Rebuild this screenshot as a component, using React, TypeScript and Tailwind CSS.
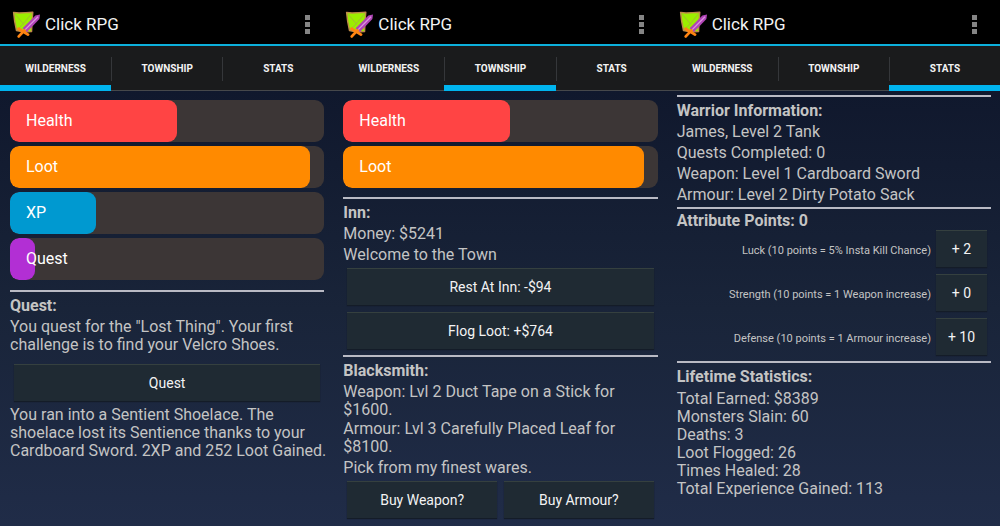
import React from 'react';

type TabName = 'Wilderness' | 'Township' | 'Stats';

const TABS: TabName[] = ['Wilderness', 'Township', 'Stats'];

const BARS = {
  health: { label: 'Health', percent: 53, color: 'bg-[#ff4444]' },
  loot: { label: 'Loot', percent: 95.5, color: 'bg-[#ff8a00]' },
  xp: { label: 'XP', percent: 27.5, color: 'bg-[#0099d0]' },
  quest: { label: 'Quest', percent: 8, color: 'bg-[#b22fd4]' },
};

const ATTRIBUTES = [
  { name: 'Luck', effect: '10 points = 5% Insta Kill Chance', points: 2 },
  { name: 'Strength', effect: '10 points = 1 Weapon increase', points: 0 },
  { name: 'Defense', effect: '10 points = 1 Armour increase', points: 10 },
];

const LIFETIME_STATS = [
  'Total Earned: $8389',
  'Monsters Slain: 60',
  'Deaths: 3',
  'Loot Flogged: 26',
  'Times Healed: 28',
  'Total Experience Gained: 113',
];

const Logo: React.FC = () => (
  <svg viewBox="0 0 28 28" className="h-7 w-7 shrink-0" aria-hidden="true">
    {/* shield */}
    <path d="M1.6 2.4 L7 3 L14 2.6 L20.8 2.2 L20 12 L19.6 21.5 L12 22 L4.5 20.5 L2.6 11 Z" fill="#9bee00" stroke="#c08a48" strokeWidth="1.4" strokeLinejoin="round" />
    <path d="M2.5 3.5 L12 14.5 M19.8 3.5 L11 14 L5 20" fill="none" stroke="#a3b23c" strokeWidth="0.8" />
    {/* sword */}
    <path d="M28 4.6 L27.4 9 L15 22 L10.6 18.2 L23.4 5.6 Z" fill="#b044b4" />
    <path d="M26 6.8 L13.2 19.6" stroke="#dd92e2" strokeWidth="1.3" />
    <path d="M6.6 18.8 L16 24.6 M12.4 20.4 L6.8 26.4" stroke="#ff8412" strokeWidth="2.8" strokeLinecap="round" />
  </svg>
);

const StatBar: React.FC<{ label: string; percent: number; color: string }> = ({ label, percent, color }) => (
  <div
    role="progressbar"
    aria-label={label}
    aria-valuenow={percent}
    className="relative flex h-[42px] items-center overflow-hidden rounded-[9px] bg-[#3c3636]"
  >
    <div className={`absolute inset-y-0 left-0 rounded-[9px] ${color}`} style={{ width: `${percent}%` }} />
    <span className="relative pb-px pl-4 text-white">{label}</span>
  </div>
);

const Rule: React.FC = () => <hr className="h-0.5 border-0 bg-[#b9bac4]" />;

const GameButton: React.FC<{ children: React.ReactNode; className?: string }> = ({ children, className = '' }) => (
  <button
    type="button"
    className={`h-[37px] border-t border-[#35403f] bg-[#1f2a33] text-[14px] text-[#f3f3f3] shadow-[0_1px_1px_#141c28] ${className}`}
  >
    {children}
  </button>
);

const Screen: React.FC<{ active: TabName; children: React.ReactNode }> = ({ active, children }) => (
  <section className="flex min-w-0 flex-col">
    <header className="flex h-[46px] items-center border-b-2 border-[#0cb0dc] bg-black pr-[23px] pl-3 pt-1">
      <Logo />
      <h1 className="ml-[5px] grow text-[17px] text-[#f3f3f3]">Click RPG</h1>
      <button type="button" aria-label="More options" className="flex flex-col gap-0.5">
        <span className="size-[5px] bg-[#858585]" />
        <span className="size-[5px] bg-[#858585]" />
        <span className="size-[5px] bg-[#858585]" />
      </button>
    </header>
    <nav className="grid h-[45px] grid-cols-3 bg-[#1a1b1c]">
      {TABS.map((tab, index) => (
        <button
          key={tab}
          type="button"
          className={`flex flex-col text-[10px] font-bold text-[#f3f3f3] uppercase ${
            tab === active ? 'border-b-[6px] border-[#00b4ee]' : 'border-b border-[#46484b] pb-[5px]'
          }`}
        >
          <span
            className={`mt-[11px] flex h-6 w-full items-center justify-center ${index > 0 ? 'border-l border-[#35373a]' : ''}`}
          >
            {tab}
          </span>
        </button>
      ))}
    </nav>
    <main className="flex grow flex-col bg-linear-to-b from-[#10182d] via-[#192439] to-[#202c48] pr-[9px] pl-2.5">
      {children}
    </main>
  </section>
);

const Wilderness: React.FC = () => (
  <Screen active="Wilderness">
    <div className="mt-[9px] mb-2.5 flex flex-col gap-1">
      <StatBar {...BARS.health} />
      <StatBar {...BARS.loot} />
      <StatBar {...BARS.xp} />
      <StatBar {...BARS.quest} />
    </div>
    <Rule />
    <div className="mt-[5px] flex flex-col gap-[3px]">
      <h2 className="font-bold">Quest:</h2>
      <p>You quest for the "Lost Thing". Your first challenge is to find your Velcro Shoes.</p>
    </div>
    <GameButton className="mx-1 mt-2.5 mb-[5px]">Quest</GameButton>
    <p className="-mr-2">
      You ran into a Sentient Shoelace. The shoelace lost its Sentience thanks to your Cardboard Sword. 2XP and 252
      Loot Gained.
    </p>
  </Screen>
);

const Township: React.FC = () => (
  <Screen active="Township">
    <div className="mt-[9px] mb-[9px] flex flex-col gap-1">
      <StatBar {...BARS.health} />
      <StatBar {...BARS.loot} />
    </div>
    <Rule />
    <div className="mt-[5px] flex flex-col gap-[3px]">
      <h2 className="font-bold">Inn:</h2>
      <p>Money: $5241</p>
      <p>Welcome to the Town</p>
    </div>
    <div className="mx-1 mt-1 mb-[6px] flex flex-col gap-[7px]">
      <GameButton>Rest At Inn: -$94</GameButton>
      <GameButton>Flog Loot: +$764</GameButton>
    </div>
    <Rule />
    <div className="mt-[5px] flex flex-col gap-[3px]">
      <h2 className="font-bold">Blacksmith:</h2>
      <div className="flex flex-col gap-px">
        <p>Weapon: Lvl 2 Duct Tape on a Stick for $1600.</p>
        <p>Armour: Lvl 3 Carefully Placed Leaf for $8100.</p>
      </div>
      <p>Pick from my finest wares.</p>
    </div>
    <div className="mx-1 mt-1 mb-2 grid grid-cols-2 gap-[7px]">
      <GameButton>Buy Weapon?</GameButton>
      <GameButton>Buy Armour?</GameButton>
    </div>
  </Screen>
);

const Stats: React.FC = () => (
  <Screen active="Stats">
    <div className="mt-1">
      <Rule />
    </div>
    <div className="mt-[5px] mb-[3px] flex flex-col gap-[3px]">
      <h2 className="font-bold">Warrior Information:</h2>
      <p>James, Level 2 Tank</p>
      <p>Quests Completed: 0</p>
      <p>Weapon: Level 1 Cardboard Sword</p>
      <p>Armour: Level 2 Dirty Potato Sack</p>
    </div>
    <Rule />
    <h2 className="mt-[3px] font-bold">Attribute Points: 0</h2>
    <div className="mr-1 mb-[6px] flex flex-col gap-[7px]">
      {ATTRIBUTES.map((attribute) => (
        <div key={attribute.name} className="flex items-center justify-end gap-[5px]">
          <span className="pt-1 text-[11px]">
            {attribute.name} ({attribute.effect})
          </span>
          <GameButton className="w-[51px]">+ {attribute.points}</GameButton>
        </div>
      ))}
    </div>
    <Rule />
    <div className="mt-[5px] flex flex-col gap-1">
      <h2 className="font-bold">Lifetime Statistics:</h2>
      <ul>
        {LIFETIME_STATS.map((stat) => (
          <li key={stat}>{stat}</li>
        ))}
      </ul>
    </div>
  </Screen>
);

const App: React.FC = () => (
  <div className="grid min-h-screen grid-cols-3 bg-[#10182d] font-[Roboto,sans-serif] text-[16px] leading-[18px] text-[#c4c4c4]">
    <Wilderness />
    <Township />
    <Stats />
  </div>
);

export default App;
